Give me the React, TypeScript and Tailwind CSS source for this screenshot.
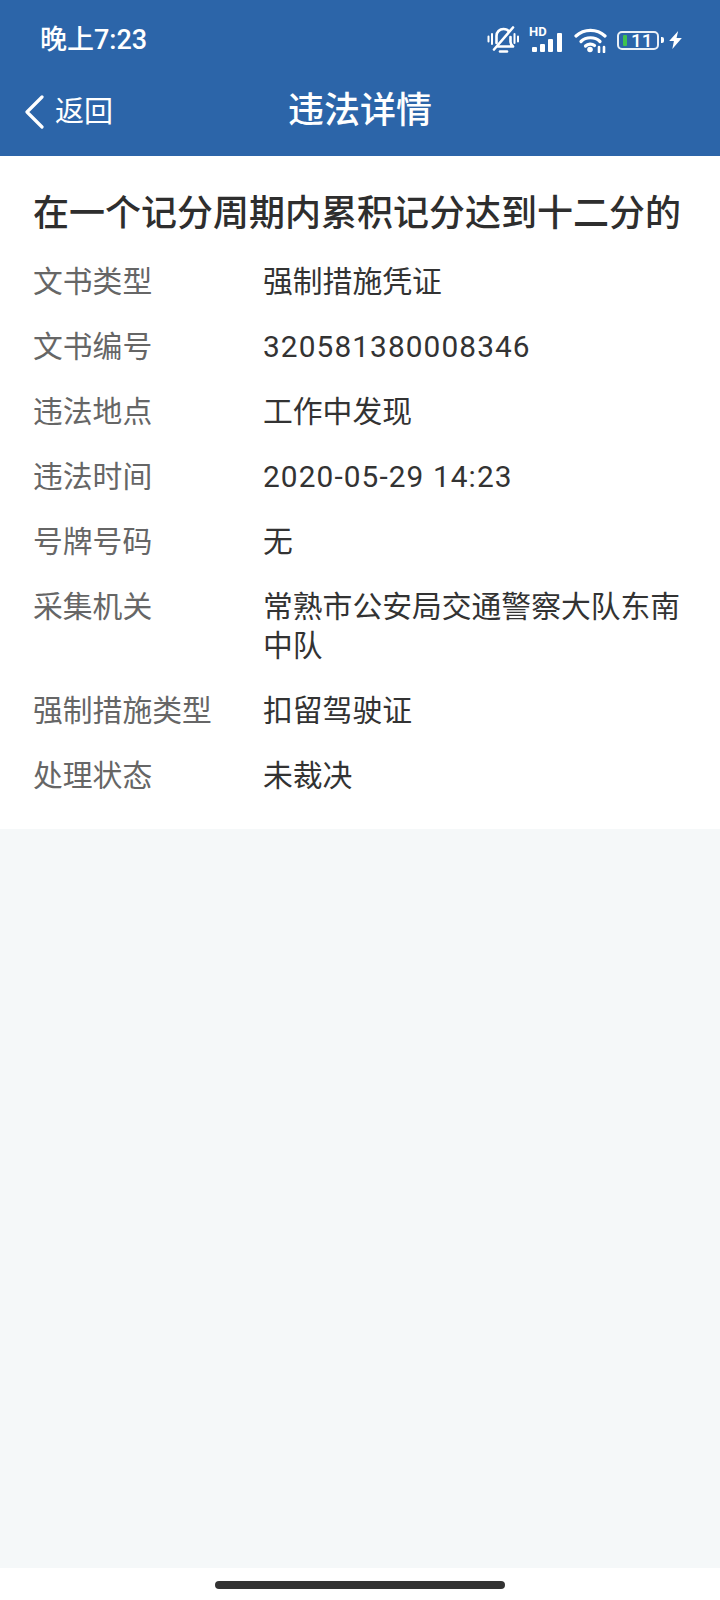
const rows = [
  { label: "文书类型", value: "强制措施凭证" },
  { label: "文书编号", value: "320581380008346", numeric: true },
  { label: "违法地点", value: "工作中发现" },
  { label: "违法时间", value: "2020-05-29 14:23", numeric: true },
  { label: "号牌号码", value: "无" },
  { label: "采集机关", value: "常熟市公安局交通警察大队东南中队" },
  { label: "强制措施类型", value: "扣留驾驶证" },
  { label: "处理状态", value: "未裁决" },
];

function BellOff() {
  return (
    <svg width="32" height="28" viewBox="0 0 32 28" fill="none" stroke="#fff" strokeWidth="2.600" strokeLinecap="round" strokeLinejoin="round">
      <path d="M9.500 17V10c0-4 3-7 7-7 2.500 0 4.500 1 5.500 2.500" />
      <path d="M23.500 11v5c0 1.500 1 3 2.500 4.500H11" />
      <path d="M13 25.500h7" />
      <path d="M7 23.500L26 1.500" />
      <path d="M1.500 10.500v5M5 8v10M27.500 8v9M31 10.500v5" strokeWidth="2" />
    </svg>
  );
}

function Signal() {
  return (
    <div className="relative h-[24px] w-[35px]">
      <span className="absolute left-0 top-[-3px] font-[Roboto,sans-serif] text-[13px] font-bold leading-[14px] text-white">HD</span>
      <div className="absolute bottom-0 left-[3px] flex items-end gap-[3px]">
        <span className="h-[5px] w-[5px] rounded-[1px] bg-white" />
        <span className="h-[8px] w-[5px] rounded-[1px] bg-white" />
        <span className="h-[13px] w-[5px] rounded-[1px] bg-white" />
        <span className="ml-[1px] h-[19px] w-[5px] rounded-[1px] bg-white" />
      </div>
    </div>
  );
}

function Wifi() {
  return (
    <svg width="33" height="26" viewBox="0 0 33 26" fill="none" stroke="#fff" strokeWidth="3.200" strokeLinecap="round">
      <path d="M2 9C10 1.500 23 1.500 31 9" />
      <path d="M7 14.500C12 9.500 21 9.500 26 14.500" />
      <path d="M11.500 19C14 16.500 18 16.500 20.500 18.500" />
      <circle cx="16" cy="22.500" r="2.800" fill="#fff" stroke="none" />
      <path d="M25 25v-5M30 25v-5" strokeWidth="2.600" />
    </svg>
  );
}

function Battery() {
  return (
    <div className="flex items-center gap-[2px]">
      <div className="flex h-[19px] w-[42px] items-center rounded-[5px] border-2 border-white/90 pl-[4px]">
        <span className="h-[11px] w-[4px] rounded-[1px] bg-[#3fc24f]" />
        <span className="ml-[4px] font-[Roboto,sans-serif] text-[19px] font-medium leading-none text-white">11</span>
      </div>
      <span className="h-[6px] w-[3px] rounded-r-[2px] bg-white" />
    </div>
  );
}

function Bolt() {
  return (
    <svg width="13" height="18" viewBox="0 0 12 17" fill="#fff">
      <path d="M8.500 0L0 9.500h4.500L3 17l9-10.500H7z" />
    </svg>
  );
}

export default function App() {
  return (
    <div className="flex h-[1600px] w-[720px] flex-col bg-[#f5f8f9] font-[Roboto,'Noto_Sans_CJK_SC',sans-serif]">
      <header className="h-[156px] bg-[#2c65a9] text-white">
        <div className="flex h-[78px] items-center justify-between pl-[40px] pr-[38px] pt-[2px]">
          <span className="text-[27px] font-medium">晚上7:23</span>
          <div className="flex items-center">
            <BellOff />
            <div className="ml-[10px]"><Signal /></div>
            <div className="ml-[10px]"><Wifi /></div>
            <div className="ml-[10px]"><Battery /></div>
            <div className="ml-[5px]"><Bolt /></div>
          </div>
        </div>
        <div className="relative flex h-[66px] items-center justify-center">
          <div className="absolute left-[24px] top-[16px] flex items-center gap-[11px]">
            <svg width="20" height="34" viewBox="0 0 20 34" fill="none" stroke="#fff" strokeWidth="3.200" strokeLinecap="round" strokeLinejoin="round">
              <path d="M18 2L3 17l15 15" />
            </svg>
            <span className="text-[29px] leading-[36px]">返回</span>
          </div>
          <h1 className="pb-[1px] text-[36px] font-medium leading-[44px]">违法详情</h1>
        </div>
      </header>
      <main className="flex flex-col bg-white pb-[34px] pl-[33px] pr-[32px] pt-[33px]">
        <h2 className="mb-[23px] whitespace-nowrap text-[36px] font-medium leading-[50px] text-[#2e2e2e]">在一个记分周期内累积记分达到十二分的</h2>
        <div className="flex flex-col gap-[26px]">
          {rows.map((row) => (
            <div key={row.label} className="flex text-[29.800px] leading-[39px]">
              <span className="w-[230px] shrink-0 text-[#666]">{row.label}</span>
              <span className={row.numeric ? "tracking-[1.100px] text-[#333]" : "text-[#333]"}>{row.value}</span>
            </div>
          ))}
        </div>
      </main>
      <div className="flex-1" />
      <footer className="flex h-[32px] items-start justify-center bg-white pt-[13px]">
        <span className="h-[8px] w-[290px] rounded-full bg-[#333]" />
      </footer>
    </div>
  );
}
